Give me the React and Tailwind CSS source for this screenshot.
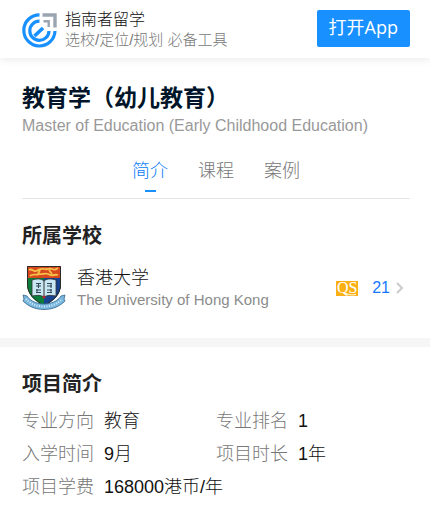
const tabs = ["简介", "课程", "案例"];

const details = [
  { label: "专业方向", value: "教育" },
  { label: "专业排名", value: "1" },
  { label: "入学时间", value: "9月" },
  { label: "项目时长", value: "1年" },
  { label: "项目学费", value: "168000港币/年" },
];

function Logo() {
  return (
    <svg viewBox="0 0 35 35" className="size-[35px] shrink-0" fill="none">
      <g stroke="#1890ff" strokeWidth="3.2">
        <path d="M17.500 1.800A15.600 15.600 0 1 0 33 18" />
        <path d="M17.500 8.200A9.600 9.600 0 1 0 27 18" />
        <path d="M12.500 23L21 15" strokeWidth="3.6" />
      </g>
      <g stroke="#9aa5b1">
        <path d="M20.500 2H33v12.500" strokeWidth="3.4" />
        <path d="M21.500 8.300h5.200v5.700" strokeWidth="2.4" />
      </g>
    </svg>
  );
}

function SchoolBadge() {
  return (
    <svg viewBox="0 0 44 44" className="size-11 shrink-0">
      <path d="M5 0h34v18c0 10-7 17-17 22C12 35 5 28 5 18z" fill="#0a7d3b" />
      <path d="M22 0h17v18c0 10-7 17-17 22z" fill="#17428f" />
      <path d="M5 0h34v12H5z" fill="#d8481f" />
      <path
        d="M5.500 .5h33v18c0 10-7 16-16.500 21C12.500 34 5.500 28 5.500 18.500z"
        fill="none"
        stroke="#2d2926"
      />
      <path
        d="M7 4c3-2 4 2 7 1s4-3 8-2 5-1 8 0 3 1 6-1M8 10c3-3 6 0 9-2 3 1 8-2 11 1 3 1 5-1 8 0M18 4l-2 4M27 4l3 4"
        fill="none"
        stroke="#f5c04a"
        strokeWidth="1.800"
      />
      <path
        d="M10 14c5-1.500 9-1.500 12 1 3-2.500 7-2.500 12-1v16c-5-1-9-1-12 1-3-2-7-2-12-1z"
        fill="#c9e8f4"
        stroke="#333"
        strokeWidth=".8"
      />
      <path d="M22 15v16" stroke="#333" />
      <path
        d="M14 17.500h5M14 20h5M16.500 17v5M14 24h5M14 26.500h5M15 23v4M25 17.500h5M25 20h5M29 17v5M25 24h5M25 26.500h5M29 23v4"
        stroke="#34495a"
        strokeWidth="1.100"
      />
      <circle cx="22" cy="31" r="1.500" fill="#b3272d" />
      <path
        d="M1 29l4 1c3 5 10 8 17 8s14-3 17-8l4-1-1 4 1 2c-5 5-12 8.500-21 8.500S6 40 1 35l1-2z"
        fill="#79b7df"
        stroke="#32648c"
        strokeWidth=".8"
      />
      <path
        d="M4 33c9 10 27 10 36 0"
        fill="none"
        stroke="#d5ecfa"
        strokeWidth="2"
        strokeDasharray="1 1.500"
      />
    </svg>
  );
}

function QsIcon() {
  return (
    <span className="relative flex h-[15px] w-[22px] items-center justify-center overflow-hidden bg-[#fbb116] font-['Liberation_Serif',serif] text-base leading-none font-normal text-white">
      QS
      <svg viewBox="0 0 22 15" className="absolute inset-0" fill="none" stroke="#fff">
        <path d="M7 12c4 0 6 3 13 1.500" />
      </svg>
    </span>
  );
}

export default function App() {
  return (
    <div className="min-h-screen bg-white font-['Liberation_Sans','Noto_Sans_CJK_SC',sans-serif] font-light text-[#111]">
      <header className="flex h-[58px] items-start justify-between pt-2.5 pr-5 pl-[22px] shadow-[0_2px_8px_rgba(0,0,0,0.08)]">
        <div className="flex items-center gap-2">
          <Logo />
          <div>
            <p className="text-base leading-5">指南者留学</p>
            <p className="text-[15px] leading-5 text-[#777]">选校/定位/规划 必备工具</p>
          </div>
        </div>
        <button className="h-[37px] rounded-xs bg-[#1890ff] px-3 pb-1 font-['Open_Sans','Noto_Sans_CJK_SC',sans-serif] text-lg leading-8 font-normal text-white">
          打开App
        </button>
      </header>

      <main>
        <section className="pt-6 pr-5 pb-7 pl-[22px]">
          <h1 className="text-[23px] leading-8 font-bold text-[#001529]">教育学（幼儿教育）</h1>
          <p className="text-base leading-6 text-[#999]">
            Master of Education (Early Childhood Education)
          </p>

          <nav className="mt-4 flex justify-center gap-[30px] border-b border-[#e5e5e5] pb-1.5">
            {tabs.map((tab, i) => (
              <a
                key={tab}
                href="#"
                className={
                  i === 0
                    ? "flex flex-col items-center text-lg leading-[34px] text-[#0a7cf5] after:mt-0.5 after:h-0.5 after:w-[11px] after:bg-[#1890ff]"
                    : "text-lg leading-[34px] text-[#777]"
                }
              >
                {tab}
              </a>
            ))}
          </nav>

          <h2 className="mt-5 text-xl leading-[34px] font-bold text-[#222]">所属学校</h2>
          <a href="#" className="mt-[13px] flex items-center">
            <SchoolBadge />
            <div className="ml-[11px] flex-1">
              <p className="text-lg leading-6">香港大学</p>
              <p className="text-[15px] leading-5 text-[#8c8c8c]">The University of Hong Kong</p>
            </div>
            <QsIcon />
            <span className="ml-3.5 text-base text-[#1677ff]">21</span>
            <svg viewBox="0 0 8 12" className="mr-1.5 ml-1.5 h-3 w-2" fill="none" stroke="#ccc" strokeWidth="2">
              <path d="M1 1l5 5-5 5" />
            </svg>
          </a>
        </section>

        <div className="h-[9px] bg-[#f6f6f6]" />

        <section className="pt-5 pr-5 pb-5 pl-[22px]">
          <h2 className="text-xl leading-[34px] font-bold text-[#222]">项目简介</h2>
          <dl className="mt-1 grid grid-cols-2 text-lg leading-[33px]">
            {details.map((item) => (
              <div key={item.label} className="flex gap-2.5 last:col-span-2">
                <dt className="shrink-0 text-[#777]">{item.label}</dt>
                <dd>{item.value}</dd>
              </div>
            ))}
          </dl>
        </section>
      </main>
    </div>
  );
}
